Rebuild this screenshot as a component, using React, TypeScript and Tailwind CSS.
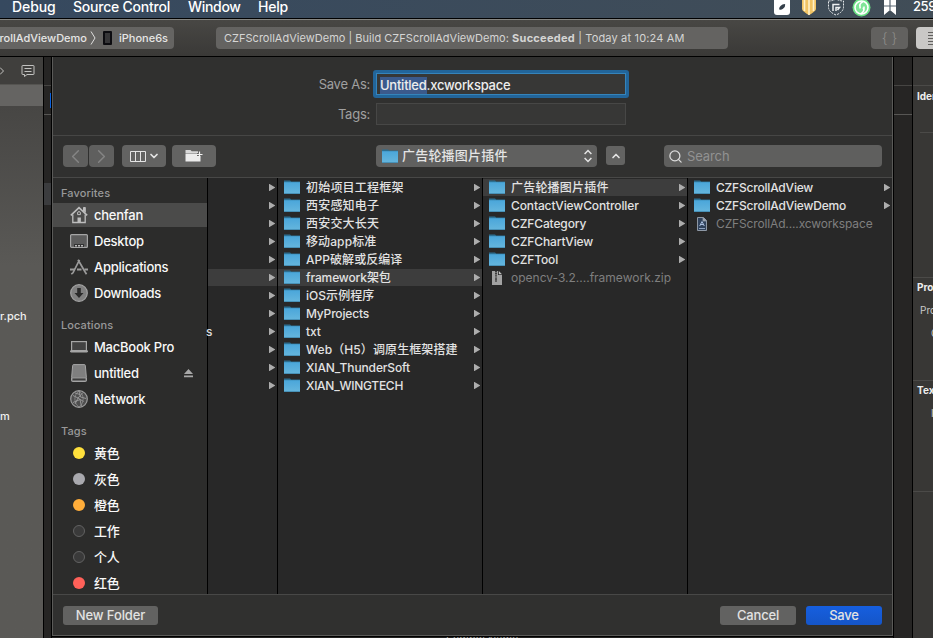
import React from 'react';
import { ChevronDown, ChevronLeft, ChevronRight, ChevronUp, Search } from 'lucide-react';

interface Entry {
  name: string;
  kind?: 'folder' | 'zip' | 'workspace';
  selected?: boolean;
  tracking?: string;
}

const HOME_COLUMN: Entry[] = [
  { name: '' }, { name: '' }, { name: '' }, { name: '' }, { name: '' },
  { name: '', selected: true },
  { name: '' }, { name: '' }, { name: 's' }, { name: '' }, { name: '' }, { name: '' },
];

const PROJECTS_COLUMN: Entry[] = [
  { name: '初始项目工程框架', tracking: 'tracking-[0.2px]' },
  { name: '西安感知电子', tracking: 'tracking-[0.2px]' },
  { name: '西安交大长天', tracking: 'tracking-[0.2px]' },
  { name: '移动app标准', tracking: 'tracking-[0.1px]' },
  { name: 'APP破解或反编译', tracking: 'tracking-[0.05px]' },
  { name: 'framework架包', selected: true },
  { name: 'iOS示例程序', tracking: 'tracking-[0.05px]' },
  { name: 'MyProjects', tracking: 'tracking-[-0.18px]' },
  { name: 'txt' },
  { name: 'Web（H5）调原生框架搭建', tracking: 'tracking-[0.1px]' },
  { name: 'XIAN_ThunderSoft' },
  { name: 'XIAN_WINGTECH', tracking: 'tracking-[-0.28px]' },
];

const FRAMEWORK_COLUMN: Entry[] = [
  { name: '广告轮播图片插件', selected: true, tracking: 'tracking-[0.2px]' },
  { name: 'ContactViewController' },
  { name: 'CZFCategory' },
  { name: 'CZFChartView' },
  { name: 'CZFTool' },
  { name: 'opencv-3.2....framework.zip', kind: 'zip', tracking: 'tracking-[0px]' },
];

const PLUGIN_COLUMN: Entry[] = [
  { name: 'CZFScrollAdView', tracking: 'tracking-[-0.2px]' },
  { name: 'CZFScrollAdViewDemo', tracking: 'tracking-[-0.19px]' },
  { name: 'CZFScrollAd....xcworkspace', kind: 'workspace', tracking: 'tracking-[-0.14px]' },
];

const TAGS = [
  { name: '黄色', dot: 'bg-[#ffe03c]' },
  { name: '灰色', dot: 'bg-[#a9a9ae]' },
  { name: '橙色', dot: 'bg-[#ffad3a]' },
  { name: '工作', dot: 'bg-[#3a3a3a] border border-[#626262]' },
  { name: '个人', dot: 'bg-[#3a3a3a] border border-[#626262]' },
  { name: '红色', dot: 'bg-[#ff6159]' },
];

const FolderIcon = () => (
  <svg width="16" height="14" viewBox="0 0 16 14" className="shrink-0">
    <defs>
      <linearGradient id="folder" x1="0" y1="0" x2="0" y2="1">
        <stop offset="0" stopColor="#4aa6da" />
        <stop offset="1" stopColor="#66b6dd" />
      </linearGradient>
    </defs>
    <path d="M0 .5h6l1.200 1H16V4H0z" fill="#2c6f91" />
    <path d="M0 2.200h16V14H0z" fill="url(#folder)" />
    <path d="M0 13.200h16v.8H0z" fill="#4289ae" />
  </svg>
);

const ZipIcon = () => (
  <svg width="16" height="16" viewBox="0 0 16 16" className="shrink-0">
    <path d="M3 1h6v4h4v10H3z" fill="#a2a2a2" />
    <path d="M9.800 1 13 4.200H9.800z" fill="#c4c4c4" />
    <path d="M7 1v9" stroke="#3c3c3c" strokeWidth="2" strokeDasharray="1.200 .6" />
    <path d="M7 9v3" stroke="#444" strokeWidth="1.400" />
  </svg>
);

const WorkspaceIcon = () => (
  <svg width="16" height="16" viewBox="0 0 16 16" className="shrink-0">
    <path d="M3.500 1.500h6l3 3v10h-9z" fill="#31435c" stroke="#8e98a5" />
    <path d="M9 1.500V5h3.500" fill="#aab2bd" stroke="#8e98a5" strokeWidth=".8" />
    <path d="M5.700 10 8 5.500 10.300 10M6 8.500h4" fill="none" stroke="#a9bede" />
    <path d="M5 12.500h6" stroke="#8ea2c0" />
  </svg>
);

const HomeIcon = () => (
  <svg width="18" height="18" viewBox="0 0 18 18" fill="none" stroke="#bdbdbd">
    <path d="M.8 9.300 9 1.700l8.200 7.600" strokeWidth="1.600" />
    <path d="M13.500 5V1.500h1.800v5" fill="#bdbdbd" />
    <path d="M2.800 8.500v8h12.400v-8" strokeWidth="1.300" />
    <path d="M7.500 16.500v-5h3.400v5z" fill="#bdbdbd" stroke="none" />
    <path d="M7.600 8.600V7a1.400 1.400 0 0 1 2.800 0v1.600z" />
  </svg>
);

const DesktopIcon = () => (
  <svg width="18" height="14" viewBox="0 0 18 14">
    <rect x=".6" y=".6" width="16.800" height="12.800" rx="1" fill="#5c5c5c" stroke="#a5a5a5" strokeWidth="1.200" />
    <path d="M4 10h10v3H4z" fill="#333" />
    <path d="M5 11h2v1.500H5zM8 11h2v1.500H8zM11 11h2v1.500h-2z" fill="#bbb" />
  </svg>
);

const ApplicationsIcon = () => (
  <svg width="18" height="16" viewBox="0 0 18 16" fill="none" stroke="#9b9b9b">
    <path d="M9.500.8 3 13.800l-1.700 1.400M8 .8l7 12 1.500 2.400" strokeWidth="1.700" />
    <path d="M0 10.500h5M7 10.500h4.500M14.500 10.500H18" strokeWidth="1.800" />
  </svg>
);

const DownloadsIcon = () => (
  <svg width="18" height="18" viewBox="0 0 18 18">
    <circle cx="9" cy="9" r="8.300" fill="#808080" stroke="#a3a3a3" strokeWidth="1.200" />
    <path d="M7.200 4h3.600v5H13.500L9 14 4.500 9h2.700z" fill="#2a2a2a" />
  </svg>
);

const LaptopIcon = () => (
  <svg width="18" height="12" viewBox="0 0 18 12">
    <rect x="1.600" y=".6" width="14.800" height="9" fill="#424242" stroke="#a5a5a5" strokeWidth="1.200" />
    <path d="M0 9.500h18v1.200l-1 .8H1l-1-.8z" fill="#a5a5a5" />
  </svg>
);

const DriveIcon = () => (
  <svg width="16" height="18" viewBox="0 0 16 18">
    <path d="M2.500.6h11q.7 0 .8.800l1.100 12.100v3.300q0 .7-.8.700H1.400q-.8 0-.8-.7v-3.300L1.700 1.400q.1-.8.800-.8z" fill="#7f7f7f" stroke="#a5a5a5" />
    <path d="M1 14h14v2.300q0 .6-.8.600H1.800q-.8 0-.8-.6z" fill="#3c3c3c" stroke="#a5a5a5" strokeWidth=".8" />
  </svg>
);

const NetworkIcon = () => (
  <svg width="18" height="18" viewBox="0 0 18 18" fill="none" stroke="#9c9c9c">
    <circle cx="9" cy="9" r="8.300" fill="#4e4e4e" strokeWidth="1.200" />
    <path d="M3 5.500 8 8l5-5.500M8 8l-3 6M8 8l5.500 3.500M9 1l1.500 6L16 8.500M3 12.500l7-3 1.500 7M5 3l5 1.500" strokeWidth=".9" />
    <path d="M9 1C3.500 5 3.500 13 9 17M9 1c5.500 4 5.500 12 0 16" strokeWidth=".6" />
  </svg>
);

const EjectIcon = () => (
  <svg width="9" height="9" viewBox="0 0 9 9" fill="#a8a8a8">
    <path d="M4.500 0 9 5H0zM0 6.500h9V8.300H0z" />
  </svg>
);

const StatusIcons = () => (
  <svg width="124" height="18" viewBox="774 0 124 18" className="shrink-0">
    <path d="M774 0h16v12a3 3 0 0 1-3 3h-10a3 3 0 0 1-3-3z" fill="#fff" />
    <path d="M779.300 9.500q-.8-2.500 3.200-5 2.500-1 2.700 0 .3 2.500-2.200 4.300-2 1.500-3.700.7z" fill="#333f49" />
    <path d="M802 0h14v9q0 2-7 6.300Q802 11 802 9z" fill="#f2c464" />
    <path d="M804.500 0v11M809 0v15M813.500 0v11" stroke="#fff0c8" strokeWidth="1.600" />
    <path d="M828.500 1q4 0 7.500-2 4 2 7.500 2v6q0 5-7.500 8-7.500-3-7.500-8z" fill="none" stroke="#e6eaec" strokeWidth="1" strokeDasharray="2 1" />
    <path d="M833 11V4.500h6.500M836 11V7.500h3.500L837.500 10" fill="none" stroke="#edf0f1" strokeWidth="1.500" />
    <circle cx="861.500" cy="7.500" r="9" fill="#69e184" />
    <circle cx="861.500" cy="7.500" r="6.500" fill="#7fe597" stroke="#fff" strokeWidth="1.600" />
    <path d="M863 1.500q-5 3-2.500 6.500M860.500 14q5-3 2.500-6.500M860 4.500v4M864 6.500v4" fill="none" stroke="#fff" strokeWidth="1.500" />
    <path d="M884 0h12v15l-6-5-6 5z" fill="#fff" />
    <path d="M890 0v10M884 6h12" stroke="#596672" strokeWidth="1.200" />
  </svg>
);

const Disclosure = () => (
  <svg width="6" height="7" viewBox="0 0 6 7" className="ml-auto shrink-0">
    <path d="M0 0h.5L6 3.200v.6L.5 7H0z" fill="#adadad" />
  </svg>
);

const ColumnRow = ({ entry }: { entry: Entry }) => {
  const kind = entry.kind ?? 'folder';
  const isFolder = kind === 'folder';
  return (
    <div className="h-[18px]">
      <div className={`flex h-[17px] items-center pl-[6px] pr-[2px] ${entry.selected ? 'bg-[#3d3d3d]' : ''}`}>
        {kind === 'folder' && <span className="-mt-px"><FolderIcon /></span>}
        {kind === 'zip' && <ZipIcon />}
        {kind === 'workspace' && <WorkspaceIcon />}
        <span
          className={`ml-[6px] whitespace-nowrap text-[12px] leading-[17px] ${entry.tracking ?? 'tracking-[-0.12px]'} ${
            isFolder ? 'font-medium text-[#e2e2e2]' : 'text-[#7f7f7f]'
          }`}
        >
          {entry.name}
        </span>
        {isFolder && <Disclosure />}
      </div>
    </div>
  );
};

const Column = ({ entries }: { entries: Entry[] }) => (
  <div className="w-[205px] shrink-0 border-r border-black bg-[#282828] pt-px">
    {entries.map((entry) => (
      <ColumnRow key={entry.name} entry={entry} />
    ))}
  </div>
);

const SidebarHeading = ({ children }: { children: React.ReactNode }) => (
  <div className="flex h-7 items-end pb-[2px] pl-2 text-[11px] font-medium leading-[14px] tracking-[0.1px] text-[#999]">
    {children}
  </div>
);

interface SidebarRowProps {
  icon: React.ReactNode;
  label: string;
  selected?: boolean;
  trailing?: React.ReactNode;
}

const SidebarRow = ({ icon, label, selected, trailing }: SidebarRowProps) => (
  <div className="h-[26px] py-px">
    <div className={`flex h-6 items-center pl-[17px] pr-[14px] ${selected ? 'bg-[#4b4b4a]' : ''}`}>
      <span className="flex w-[18px] shrink-0 justify-center">{icon}</span>
      <span className="ml-[6px] text-[13px] font-medium leading-4 tracking-[-0.24px] text-[#f8f8f8]">{label}</span>
      {trailing && <span className="ml-auto">{trailing}</span>}
    </div>
  </div>
);

const Sidebar = () => (
  <div className="w-[155px] shrink-0 overflow-hidden border-r border-black bg-[#2c2c2b]">
    <div className="-mt-1">
      <SidebarHeading>Favorites</SidebarHeading>
      <SidebarRow icon={<HomeIcon />} label="chenfan" selected />
      <SidebarRow icon={<DesktopIcon />} label="Desktop" />
      <SidebarRow icon={<ApplicationsIcon />} label="Applications" />
      <SidebarRow icon={<DownloadsIcon />} label="Downloads" />
      <SidebarHeading>Locations</SidebarHeading>
      <SidebarRow icon={<LaptopIcon />} label="MacBook Pro" />
      <SidebarRow icon={<DriveIcon />} label="untitled" trailing={<EjectIcon />} />
      <SidebarRow icon={<NetworkIcon />} label="Network" />
      <SidebarHeading>Tags</SidebarHeading>
      {TAGS.map((tag) => (
        <SidebarRow key={tag.name} icon={<span className={`size-3 rounded-full ${tag.dot}`} />} label={tag.name} />
      ))}
    </div>
  </div>
);

const MenuBar = () => (
  <div className="flex h-[18px] shrink-0 items-start bg-linear-to-r from-[#36495f] to-[#414d57] text-[14px] font-medium leading-[13px] text-white">
    <span className="ml-3 w-[61px] tracking-[-0.1px]">Debug</span>
    <span className="w-[115px] whitespace-nowrap tracking-[-0.22px]">Source Control</span>
    <span className="w-[70px] tracking-[-0.3px]">Window</span>
    <span className="tracking-[-0.2px]">Help</span>
    <div className="ml-auto flex">
      <StatusIcons />
      <span className="ml-[15px] w-5 overflow-hidden text-[13px] tracking-[-0.4px]">259</span>
    </div>
  </div>
);

const WindowToolbar = () => (
  <div className="flex h-[38px] shrink-0 items-start border-b border-t border-b-black border-t-[#858581] bg-linear-to-b from-[#484744] to-[#3a3937] pt-[7px] text-[11px] leading-[22px] text-[#d5d5d4]">
    <div className="flex h-[22px] w-[174px] items-center overflow-hidden rounded-r bg-[#656462] font-medium text-[#e6e6e5]">
      <span className="w-[87px] whitespace-nowrap text-right" dir="rtl">rollAdViewDemo</span>
      <svg width="6" height="14" viewBox="0 0 6 14" className="ml-[3px]" fill="none" stroke="#dededd">
        <path d="M1 .5 5 7 1 13.500" />
      </svg>
      <span className="ml-[7px] h-[14px] w-[9px] rounded-[1px] border-2 border-[#0c0c10] bg-[#363638]" />
      <span className="ml-[7px]">iPhone6s</span>
    </div>
    <div className="ml-[42px] h-[22px] w-[512px] whitespace-nowrap rounded bg-[#646361] pl-2 tracking-[0.05px]">
      <span className="tracking-[0.02px]">CZFScrollAdViewDemo | Build CZFScrollAdViewDemo:</span>{' '}
      <b className="font-bold tracking-[0.25px]">Succeeded</b>
      <span className="tracking-[0.17px]"> | Today at 10:24 AM</span>
    </div>
    <div className="ml-auto flex h-[22px] w-[37px] items-center justify-center rounded bg-[#62615f] text-[14px] font-light text-[#8d8c8a]">
      {'{ }'}
    </div>
    <div className="ml-2 flex h-[22px] w-[17px] flex-col justify-center gap-[2px] rounded-l bg-[#c9c8c6] pl-3">
      {[0, 1, 2, 3, 4].map((i) => (
        <span key={i} className="h-px bg-[#62615f]" />
      ))}
    </div>
  </div>
);

const NavigatorStrip = () => (
  <div className="flex w-11 shrink-0 flex-col border-r border-black bg-[#403f3d] text-[11px] font-medium leading-4 text-[#efefee]">
    <div className="flex h-7 items-center border-b border-[#555451] text-[#c2c2c0]">
      <svg width="4" height="8" viewBox="0 0 4 8" fill="none" stroke="currentColor"><path d="m0 .5 3.500 3.500L0 7.500" /></svg>
      <svg width="14" height="12" viewBox="0 0 14 12" className="ml-[17px]" fill="none" stroke="currentColor">
        <path d="M1.500.5h11q.5 0 .5.500v8q0 .5-.5.500H6L3.500 11.500v-2h-2Q1 9.500 1 9V1q0-.5.500-.5zM3.500 3.500h7M3.500 6.500h7" />
      </svg>
    </div>
    <div className="h-[21px] bg-[#656462]" />
    <div className="flex-1 bg-linear-to-b from-[#474644] via-[#5a5956] via-[30%] to-[#5a5956] pt-[202px]">
      <div>r.pch</div>
      <div className="mt-21">m</div>
    </div>
  </div>
);

const EditorGutter = () => (
  <div className="flex w-2 shrink-0 flex-col border-r border-black bg-[#262524]">
    <div className="h-[29px] border-b border-[#464543]" />
    <div className="flex h-[29px] items-center justify-end border-b border-[#575654]">
      <span className="h-[15px] w-px bg-[#0a62e0]" />
    </div>
    <div className="mt-[68px] h-[22px] bg-[#3b3c3e]" />
  </div>
);

const InspectorStrip = () => (
  <div className="flex min-w-0 flex-1 flex-col overflow-hidden border-l border-black bg-[#383735] text-[10px] leading-[14px] text-[#cacac9]">
    <div className="h-[29px] shrink-0 border-b border-[#4b4a48]" />
    <div className="h-[46px] shrink-0 pl-[4px] pt-[3px] font-bold text-[#ededec]">Identity</div>
    <div className="ml-[7px] h-px shrink-0 bg-[#4b4a48]" />
    <div className="mt-[144px] h-[103px] shrink-0 whitespace-nowrap border-t border-[#4b4a48] pl-[4px] pt-[2px]">
      <div className="font-bold text-[#ededec]">Project</div>
      <div className="ml-[3px] mt-[9px]">Project</div>
      <div className="ml-[14px] mt-[9px]">Class</div>
    </div>
    <div className="h-[111px] shrink-0 whitespace-nowrap border-t border-[#4b4a48] pl-[4px] pt-[2px]">
      <div className="font-bold text-[#ededec]">Text</div>
      <div className="ml-[14px] mt-[9px]">Indent</div>
    </div>
    <div className="h-px shrink-0 bg-[#4b4a48]" />
  </div>
);

const NameForm = () => (
  <div className="h-[79px] shrink-0 border-b border-[#464645] pt-[13px] text-[13px]">
    <div className="flex h-7 items-center">
      <label className="w-[317px] pt-[2px] text-right tracking-[-0.25px] text-[#a0a0a0]">Save As:</label>
      <div className="ml-[3px] h-7 w-[256px] rounded-[3px] bg-[#22659a] p-[3px]">
        <div className="flex h-full items-center border border-[#3584bb] bg-[#373736] pl-[3px] pt-[3px] font-medium tracking-[-0.25px] text-[#ededed]">
          <span className="bg-[#3b5a8c] leading-[17px]">Untitled</span>.xcworkspace
        </div>
      </div>
    </div>
    <div className="mt-[5px] flex h-[22px] items-center">
      <label className="w-[317px] pt-[2px] text-right tracking-[-0.25px] text-[#a0a0a0]">Tags:</label>
      <div className="ml-[6px] h-[22px] w-[250px] border border-[#474746] bg-[#373736]" />
    </div>
  </div>
);

const BrowserToolbar = () => (
  <div className="flex h-[42px] shrink-0 items-start border-b border-[#484847] pl-[10px] pt-[9px] text-[#e4e4e4]">
    <button className="flex h-[22px] w-[25px] items-center justify-center rounded bg-[#5f5f5e] text-[#858585]">
      <ChevronLeft size={23} strokeWidth={1.500} />
    </button>
    <button className="ml-px flex h-[22px] w-[25px] items-center justify-center rounded bg-[#5f5f5e] text-[#858585]">
      <ChevronRight size={23} strokeWidth={1.500} />
    </button>
    <button className="ml-2 flex h-[22px] w-11 items-center rounded bg-[#636362] pl-2">
      <svg width="16" height="11" viewBox="0 0 16 11" fill="none" stroke="currentColor">
        <path d="M.5.500h15v10H.5zM5.500.5v10M10.500.5v10" />
      </svg>
      <ChevronDown size={12} strokeWidth={3.500} className="ml-[2px]" />
    </button>
    <button className="ml-[6px] flex h-[22px] w-11 items-center justify-center rounded bg-[#636362]">
      <svg width="18" height="12" viewBox="0 0 18 12">
        <path d="M.5 0h5l1.200 1.300h6.300V3H.5z" fill="#d8d8d8" />
        <path d="M.5 3.500H12V6h3.500v5.500H.5z" fill="#ececec" />
        <path d="M14.500 1.500v6M11.500 4.500h6" stroke="#f4f4f4" strokeWidth="1.200" />
      </svg>
    </button>
    <button className="ml-[160px] flex h-[22px] w-[221px] items-center rounded bg-[#60605f] px-[6px] text-[13px] font-medium">
      <FolderIcon />
      <span className="ml-1 tracking-[0.2px]">广告轮播图片插件</span>
      <svg width="8" height="14" viewBox="0 0 8 14" className="-mr-px ml-auto" fill="none" stroke="currentColor" strokeWidth="1.500">
        <path d="M.6 5 4 1.500 7.400 5M.6 9 4 12.500 7.400 9" />
      </svg>
    </button>
    <button className="ml-[9px] mt-px flex h-[19px] w-[19px] items-center justify-center rounded-[3px] bg-[#636362]">
      <ChevronUp size={12} strokeWidth={3.300} />
    </button>
    <div className="ml-[39px] flex h-[22px] w-[218px] items-center rounded bg-[#5f5f5e] pl-[4px] text-[13px] text-[#929292]">
      <Search size={15} strokeWidth={2} className="text-[#dcdcdc]" />
      <span className="ml-[4px] pt-px tracking-[-0.1px]">Search</span>
    </div>
  </div>
);

const Footer = () => (
  <div className="flex flex-1 items-start border-t border-[#484847] px-[10px] pt-[11px] text-[13px] font-medium leading-[19px] text-[#e2e2e2]">
    <button className="h-[19px] w-[95px] rounded-[3px] bg-[#626261] tracking-[-0.1px]">New Folder</button>
    <button className="ml-auto h-[19px] w-[76px] rounded-[3px] bg-[#626261] tracking-[-0.2px]">Cancel</button>
    <button className="ml-[10px] h-[19px] w-[76px] rounded-[3px] bg-linear-to-b from-[#165fdf] to-[#1555c8] tracking-[-0.2px]">Save</button>
  </div>
);

const SaveSheet = () => (
  <div className="flex h-[579px] flex-col border-b border-l border-r border-[#5a5a58] bg-[#30302f]">
    <NameForm />
    <BrowserToolbar />
    <div className="flex h-[416px] shrink-0 overflow-hidden">
      <Sidebar />
      {/* scrolled column, only its right end stays visible */}
      <div className="w-[70px] shrink-0 border-r border-black bg-[#282828] pt-px">
        {HOME_COLUMN.map((entry, i) => (
          <div key={i} className="h-[18px]">
            <div className={`flex h-[17px] items-center pr-[2px] text-[12px] font-medium text-[#dedede] ${entry.selected ? 'bg-[#3d3d3d]' : ''}`}>
              <span className="-ml-[2px]">{entry.name}</span>
              <Disclosure />
            </div>
          </div>
        ))}
      </div>
      <Column entries={PROJECTS_COLUMN} />
      <Column entries={FRAMEWORK_COLUMN} />
      <div className="min-w-0 flex-1 bg-[#282828] pt-px">
        {PLUGIN_COLUMN.map((entry) => (
          <ColumnRow key={entry.name} entry={entry} />
        ))}
      </div>
    </div>
    <Footer />
  </div>
);

const App: React.FC = () => {
  return (
    <div className="flex h-[638px] w-[933px] flex-col overflow-hidden bg-black font-['Inter','Noto_Sans_CJK_SC',sans-serif]">
      <MenuBar />
      <div className="h-px shrink-0 bg-black" />
      <WindowToolbar />
      <div className="flex min-h-0 flex-1">
        <NavigatorStrip />
        <EditorGutter />
        <div className="flex w-[841px] shrink-0 flex-col">
          <SaveSheet />
          <div className="mt-px h-px overflow-hidden bg-[#232221] pl-[394px] text-[11px] leading-[5px] text-[#aaa]">Symbol Name</div>
        </div>
        <div className="w-[19px] shrink-0 border-l border-black bg-[#262524]">
          <div className="h-[29px] border-b border-[#464543]" />
          <div className="h-[29px] border-b border-[#575654]" />
        </div>
        <InspectorStrip />
      </div>
    </div>
  );
};

export default App;
